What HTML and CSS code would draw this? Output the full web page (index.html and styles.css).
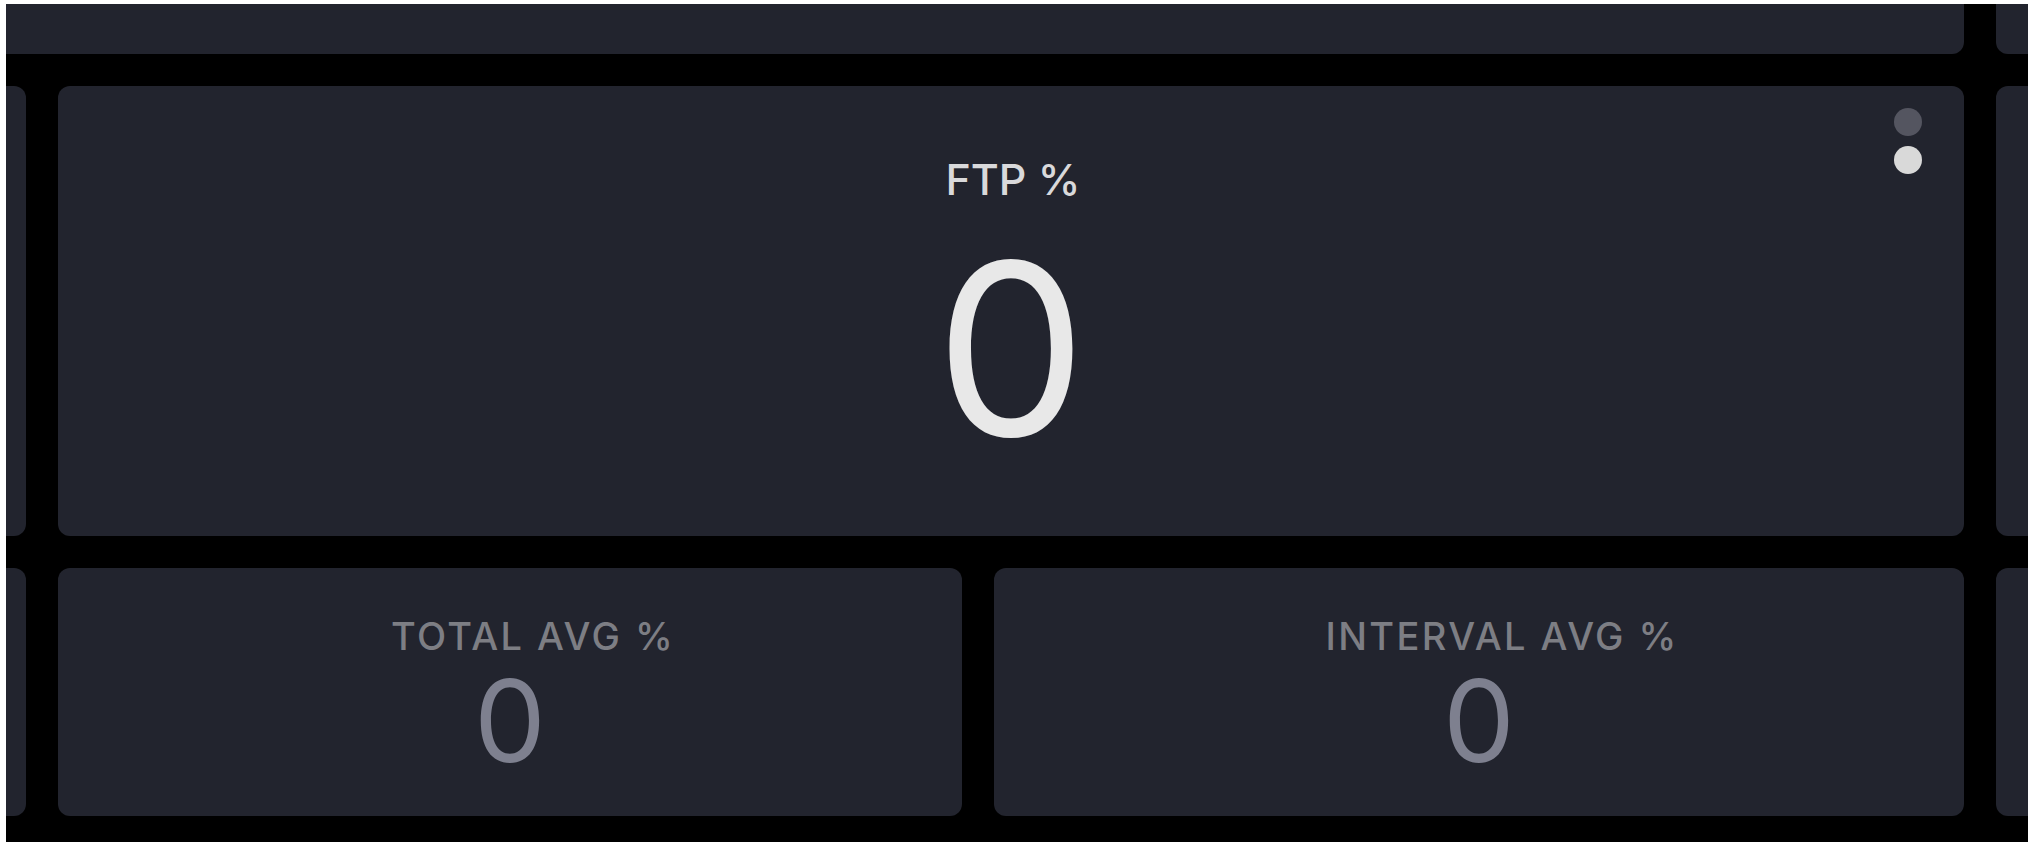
FILE: index.html
```html
<!DOCTYPE html>
<html lang="en">
<head>
<meta charset="utf-8">
<title>Workout metrics</title>
<link rel="stylesheet" href="styles.css">
</head>
<body>
<div class="viewport">
  <div class="board">
    <div class="card cut-left span-2 row-top"></div>
    <div class="card cut-right row-top"></div>

    <div class="card cut-left"></div>
    <div class="card main">
      <div class="main-label">FTP %</div>
      <div class="main-value">0</div>
      <div class="pager">
        <span class="dot"></span>
        <span class="dot active"></span>
      </div>
    </div>
    <div class="card cut-right"></div>

    <div class="card cut-left"></div>
    <div class="pair">
      <div class="card stat">
        <div class="stat-label">TOTAL AVG %</div>
        <div class="stat-value">0</div>
      </div>
      <div class="card stat">
        <div class="stat-label">INTERVAL AVG %</div>
        <div class="stat-value">0</div>
      </div>
    </div>
    <div class="card cut-right"></div>
  </div>
</div>
</body>
</html>
```
FILE: styles.css
```css
html, body {
  margin: 0;
  padding: 0;
  background: #ffffff;
}

body {
  padding: 4px 4px 6px 6px;
  font-family: "Inter", "Noto Sans", sans-serif;
}

.viewport {
  height: 838px;
  background: #000000;
  overflow: hidden;
}

.board {
  display: grid;
  grid-template-columns: 20px 1906px 32px;
  grid-template-rows: 50px 450px 248px;
  gap: 32px;
  padding-bottom: 26px;
}

.card {
  background: #22242e;
  border-radius: 12px;
}

.span-2 {
  grid-column: 1 / 3;
}

.row-top.cut-left {
  border-radius: 0 0 12px 0;
}

.row-top.cut-right {
  border-radius: 0 0 0 12px;
}

.cut-left {
  border-radius: 0 12px 12px 0;
}

.cut-right {
  border-radius: 12px 0 0 12px;
}

.main {
  position: relative;
  display: flex;
  flex-direction: column;
  align-items: center;
  padding-top: 71px;
}

.main-label {
  padding-left: 4px;
  font-size: 43px;
  line-height: 44px;
  font-weight: 500;
  color: #d9d9db;
  letter-spacing: 0;
}

.main-value {
  margin-top: 28px;
  font-size: 240px;
  line-height: 240px;
  font-weight: 400;
  color: #e8e8e8;
}

.pager {
  position: absolute;
  top: 22px;
  right: 42px;
  display: flex;
  flex-direction: column;
  gap: 10px;
}

.dot {
  width: 28px;
  height: 28px;
  border-radius: 50%;
  background: #545560;
}

.dot.active {
  background: #d9d9d9;
}

.pair {
  display: grid;
  grid-template-columns: 904px 970px;
  gap: 32px;
}

.stat {
  display: flex;
  flex-direction: column;
  align-items: center;
  padding-top: 49px;
}

.stat-label {
  padding-left: 46px;
  font-size: 38px;
  line-height: 38px;
  font-weight: 500;
  letter-spacing: 2.4px;
  color: #7d7e84;
}

.stat-value {
  margin-top: 9px;
  font-size: 114px;
  line-height: 114px;
  font-weight: 400;
  color: #7e808f;
}
```
